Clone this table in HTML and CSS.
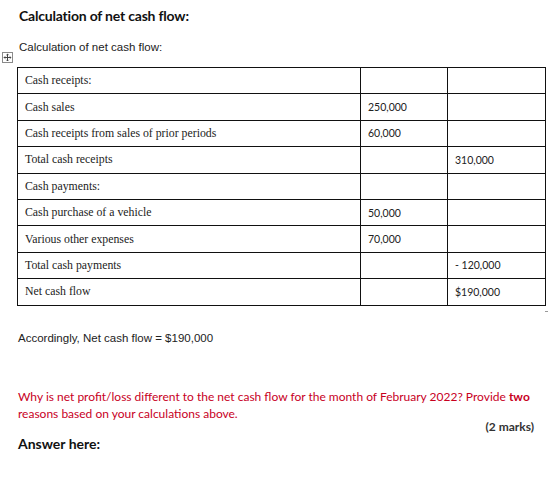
FILE: index.html
```html
<!DOCTYPE html>
<html>
<head>
<meta charset="utf-8">
<link rel="stylesheet" href="styles.css">
</head>
<body>
<div class="page">
  <h1 class="title">Calculation of net cash flow:</h1>
  <p class="sub">Calculation of net cash flow:</p>
  <div class="table-wrap">
    <span class="move-handle">
      <svg width="11" height="11" viewBox="0 0 11 11"><rect x="0.5" y="0.5" width="10" height="10" fill="#fff" stroke="#8a8a8a"/><path d="M5.5 2v7M2 5.5h7" stroke="#444" stroke-width="1"/><path d="M4.3 3.2L5.5 2l1.2 1.2M4.3 7.8L5.5 9l1.2-1.2M3.2 4.3L2 5.5l1.2 1.2M7.8 4.3L9 5.5 7.8 6.7" fill="none" stroke="#444" stroke-width="0.8"/></svg>
    </span>
    <table class="cash">
      <colgroup><col class="c1"><col class="c2"><col class="c3"></colgroup>
      <tr><td>Cash receipts:</td><td class="num"></td><td class="num"></td></tr>
      <tr><td>Cash sales</td><td class="num">250,000</td><td class="num"></td></tr>
      <tr><td>Cash receipts from sales of prior periods</td><td class="num">60,000</td><td class="num"></td></tr>
      <tr><td>Total cash receipts</td><td class="num"></td><td class="num">310,000</td></tr>
      <tr><td>Cash payments:</td><td class="num"></td><td class="num"></td></tr>
      <tr><td>Cash purchase of a vehicle</td><td class="num">50,000</td><td class="num"></td></tr>
      <tr><td>Various other expenses</td><td class="num">70,000</td><td class="num"></td></tr>
      <tr><td>Total cash payments</td><td class="num"></td><td class="num">- 120,000</td></tr>
      <tr><td>Net cash flow</td><td class="num"></td><td class="num">$190,000</td></tr>
    </table>
    <span class="resize-handle"></span>
  </div>
  <p class="result">Accordingly, Net cash flow = $190,000</p>
  <p class="question">Why is net profit/loss different to the net cash flow for the month of February 2022? Provide <b>two</b> reasons based on your calculations above.</p>
  <p class="marks">(2 marks)</p>
  <p class="answer">Answer here:</p>
</div>
</body>
</html>
```
FILE: styles.css
```css
html, body { margin: 0; padding: 0; background: #fff; }
.page { width: 548px; height: 485px; padding: 0 14px 0 18px; box-sizing: border-box; }
.title { margin: 0; padding: 6px 0 0 1px; font-family: Lato, "Open Sans", sans-serif; font-weight: 700; font-size: 14px; letter-spacing: -0.2px; line-height: 20px; color: #111; }
.sub { margin: 14px 0 0 1px; font-family: "Liberation Sans", Arial, sans-serif; font-size: 11.5px; line-height: 14px; color: #222; }
.table-wrap { position: relative; margin: 13px 0 0 -1px; }
.move-handle { position: absolute; left: -15px; top: -15px; width: 11px; height: 11px; line-height: 0; }
.cash { border-collapse: collapse; width: 528px; table-layout: fixed; font-family: "Liberation Serif", "Times New Roman", serif; font-size: 11.8px; color: #222; }
.cash col.c1 { width: 343px; }
.cash col.c2 { width: 87px; }
.cash col.c3 { width: 98px; }
.cash td { border: 1.5px solid #111; height: 26.4px; padding: 0 0 0 7px; box-sizing: border-box; vertical-align: middle; white-space: nowrap; }
.cash td.num { font-family: Lato, "Open Sans", sans-serif; font-size: 10.5px; color: #222; }
.resize-handle { position: absolute; left: 528px; top: 239px; width: 5px; height: 5px; border: 1px solid #999; border-left: none; border-top: none; }
.result { margin: 25px 0 0 0; font-family: "Liberation Sans", Arial, sans-serif; font-size: 11.5px; line-height: 14px; color: #222; }
.question { margin: 43px 0 0 0; font-family: Lato, "Open Sans", sans-serif; font-size: 12px; line-height: 17px; color: #c8001e; }
.question b { color: #c8001e; font-weight: 700; }
.marks { margin: -1.5px 0 0 0; text-align: right; font-family: Lato, sans-serif; font-weight: 700; font-size: 12px; line-height: 14px; color: #333; }
.answer { margin: 1px 0 0 0; font-family: Lato, sans-serif; font-weight: 700; font-size: 14px; line-height: 18px; color: #111; }
```
